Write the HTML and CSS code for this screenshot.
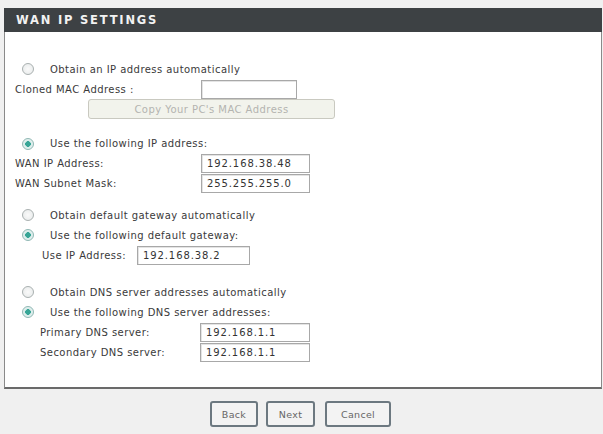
FILE: index.html
```html
<!DOCTYPE html>
<html>
<head>
<meta charset="utf-8">
<link rel="stylesheet" href="styles.css">
</head>
<body>
<div class="page">
  <section class="panel">
    <h1 class="panel-title">WAN IP SETTINGS</h1>
    <div class="panel-body">
      <div class="group">
        <div class="row radio-row"><span class="radio"></span><span class="rtext">Obtain an IP address automatically</span></div>
        <div class="row field-row"><span class="label">Cloned MAC Address :</span><span class="input w-mac"></span></div>
        <div class="row btn-row"><span class="copy-btn">Copy Your PC's MAC Address</span></div>
      </div>
      <div class="group g2">
        <div class="row radio-row short"><span class="radio on"></span><span class="rtext">Use the following IP address:</span></div>
        <div class="row field-row"><span class="label">WAN IP Address:</span><span class="input w-wan">192.168.38.48</span></div>
        <div class="row field-row"><span class="label">WAN Subnet Mask:</span><span class="input w-wan">255.255.255.0</span></div>
      </div>
      <div class="group g3">
        <div class="row radio-row"><span class="radio"></span><span class="rtext">Obtain default gateway automatically</span></div>
        <div class="row radio-row"><span class="radio on"></span><span class="rtext">Use the following default gateway:</span></div>
        <div class="row field-row gw"><span class="label lbl-gw">Use IP Address:</span><span class="input w-gw">192.168.38.2</span></div>
      </div>
      <div class="group g4">
        <div class="row radio-row"><span class="radio"></span><span class="rtext">Obtain DNS server addresses automatically</span></div>
        <div class="row radio-row"><span class="radio on"></span><span class="rtext">Use the following DNS server addresses:</span></div>
        <div class="row field-row dns"><span class="label lbl-dns">Primary DNS server:</span><span class="input w-dns">192.168.1.1</span></div>
        <div class="row field-row dns tall"><span class="label lbl-dns">Secondary DNS server:</span><span class="input w-dns">192.168.1.1</span></div>
      </div>
    </div>
  </section>
  <div class="actions">
    <button class="btn b-back">Back</button>
    <button class="btn b-next">Next</button>
    <button class="btn b-cancel">Cancel</button>
  </div>
</div>
</body>
</html>
```
FILE: styles.css
```css
html, body {
  margin: 0;
  padding: 0;
  background: #f0f0f0;
}
body {
  font-family: "DejaVu Sans", Verdana, sans-serif;
  font-size: 10px;
  letter-spacing: 0.45px;
  color: #3a3a3a;
}
.page {
  width: 603px;
  height: 434px;
  padding-top: 8px;
  box-sizing: border-box;
}
.panel {
  margin-left: 4px;
  width: 598px;
  background: #fff;
  border-left: 1px solid #8a8a8a;
  border-right: 1px solid #8a8a8a;
  border-bottom: 2px solid #6a6a6a;
  box-sizing: border-box;
}
.panel-title {
  margin: 0 -1px;
  height: 24px;
  line-height: 25px;
  background: #3d4144;
  color: #f2f2f2;
  font-family: "DejaVu Sans", Verdana, sans-serif;
  font-weight: bold;
  font-size: 11.5px;
  letter-spacing: 1.8px;
  padding-left: 12px;
}
.panel-body {
  padding: 27px 0 24px 10px;
}
.group { display: flex; flex-direction: column; }
.g2 { margin-top: 15px; }
.g3 { margin-top: 12px; }
.g4 { margin-top: 17px; }
.row {
  height: 20px;
  display: flex;
  align-items: center;
  white-space: nowrap;
}
.row.short { height: 19px; }
.row.tall { height: 21px; }
.radio-row { padding-left: 7px; }
.radio {
  width: 12px;
  height: 12px;
  border-radius: 50%;
  border: 1px solid #a9b0b0;
  background: radial-gradient(circle, #fafafa 0%, #e6e9e9 100%);
  box-sizing: border-box;
  flex: none;
}
.radio.on {
  border-color: #8fb7b3;
  background: radial-gradient(circle, #37a596 0 2.6px, #d8ecea 3px, #eef5f4 100%);
}
.rtext { margin-left: 16px; }
.label { width: 186px; flex: none; }
.lbl-gw { width: 122px; padding-left: 27px; box-sizing: border-box; }
.lbl-dns { width: 185px; padding-left: 25px; box-sizing: border-box; }
.input {
  height: 19px;
  line-height: 18px;
  box-sizing: border-box;
  border: 1px solid #a8a8a8;
  background: #fff;
  padding-left: 5px;
  font-size: 10px;
  color: #333;
  letter-spacing: 0.9px;
  box-shadow: inset 1px 1px 0 #e4e4e4;
}
.w-mac { width: 96px; }
.w-wan { width: 109px; }
.w-gw { width: 113px; }
.w-dns { width: 110px; }
.btn-row { padding-left: 73px; }
.copy-btn {
  width: 247px;
  height: 20px;
  line-height: 19px;
  box-sizing: border-box;
  text-align: center;
  background: #f2f3ec;
  border: 1px solid #c9c9c0;
  border-radius: 3px;
  color: #b4b4b0;
}
.actions {
  display: flex;
  padding-top: 12px;
  padding-left: 210px;
}
.btn {
  height: 26px;
  box-sizing: border-box;
  background: #f3f3f3;
  border: 2px solid #6c7880;
  border-radius: 3px;
  font-family: "DejaVu Sans", Verdana, sans-serif;
  font-size: 9.5px;
  letter-spacing: 0.3px;
  color: #666;
  padding: 0;
  margin: 0;
}
.b-back { width: 48px; }
.b-next { width: 49px; margin-left: 8px; }
.b-cancel { width: 66px; margin-left: 10px; }
```
